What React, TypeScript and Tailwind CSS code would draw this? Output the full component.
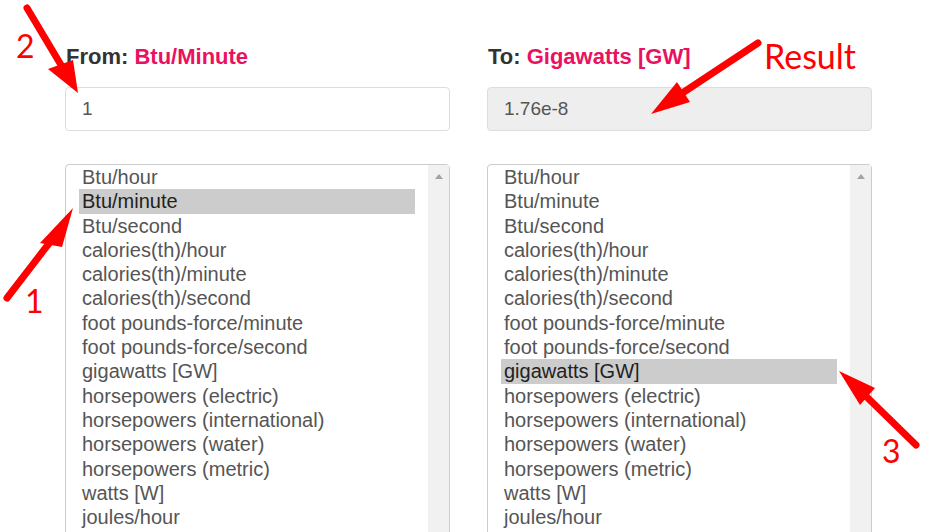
import React from 'react';

const units = [
  'Btu/hour',
  'Btu/minute',
  'Btu/second',
  'calories(th)/hour',
  'calories(th)/minute',
  'calories(th)/second',
  'foot pounds-force/minute',
  'foot pounds-force/second',
  'gigawatts [GW]',
  'horsepowers (electric)',
  'horsepowers (international)',
  'horsepowers (water)',
  'horsepowers (metric)',
  'watts [W]',
  'joules/hour',
];

const UnitList = ({ selected }: { selected: string }): React.JSX.Element => (
  <div className="mt-[33px] flex h-[420px] rounded-t-[4px] border border-[#cccccc] bg-white">
    <div className="flex-1 px-[13px] text-[20px]">
      {units.map((u) => (
        <div
          key={u}
          className={
            u === selected
              ? 'h-[24.3px] bg-[#cccccc] pl-[3px] leading-[24.3px] text-[#222222]'
              : 'h-[24.3px] pl-[3px] leading-[24.3px] text-[#555555]'
          }
        >
          {u}
        </div>
      ))}
    </div>
    <div className="flex w-[21px] justify-center bg-[#f1f1f1] pt-[9px]">
      <div className="h-0 w-0 border-x-[4px] border-b-[5px] border-x-transparent border-b-[#a3a3a3]" />
    </div>
  </div>
);

const Column = ({
  prefix,
  unit,
  value,
  readOnly,
  selected,
}: {
  prefix: string;
  unit: string;
  value: string;
  readOnly?: boolean;
  selected: string;
}): React.JSX.Element => (
  <div className="flex w-[385px] flex-col">
    <p className="h-[30px] pl-[1px] text-[22px] font-bold leading-[30px] text-[#333333]">
      {prefix} <span className="text-[#ea1160]">{unit}</span>
    </p>
    <div
      className={
        readOnly
          ? 'mt-[15px] flex h-[44px] items-center rounded-[4px] border border-[#dddddd] bg-[#eeeeee] px-[16px] text-[19px] text-[#555555]'
          : 'mt-[15px] flex h-[44px] items-center rounded-[4px] border border-[#dddddd] bg-white px-[16px] text-[19px] text-[#555555]'
      }
    >
      {value}
    </div>
    <UnitList selected={selected} />
  </div>
);

const Arrow = ({ x1, y1, x2, y2, h1, h2 }: { x1: number; y1: number; x2: number; y2: number; h1: [number, number]; h2: [number, number] }) => (
  <g>
    <line x1={x1} y1={y1} x2={(x2 + (h1[0] + h2[0]) / 2) / 2} y2={(y2 + (h1[1] + h2[1]) / 2) / 2} stroke="#ff0000" strokeWidth={7} strokeLinecap="round" />
    <polygon points={`${x2},${y2} ${h1[0]},${h1[1]} ${h2[0]},${h2[1]}`} fill="#ff0000" />
  </g>
);

export default function App(): React.JSX.Element {
  return (
    <div className="relative h-[532px] w-[936px] overflow-hidden bg-white font-['Liberation_Sans',Arial,sans-serif]">
      <div className="flex gap-[37px] pl-[65px] pt-[42px]">
        <Column prefix="From:" unit="Btu/Minute" value="1" selected="Btu/minute" />
        <Column prefix="To:" unit="Gigawatts [GW]" value="1.76e-8" readOnly selected="gigawatts [GW]" />
      </div>

      {/* annotations */}
      <svg className="pointer-events-none absolute left-0 top-0" width={936} height={532}>
        <Arrow x1={27} y1={8} x2={78} y2={93} h1={[48, 69]} h2={[73, 60]} />
        <Arrow x1={758} y1={43} x2={651} y2={114} h1={[677, 82]} h2={[690, 102]} />
        <Arrow x1={916} y1={445} x2={839} y2={371} h1={[875, 388]} h2={[860, 405]} />
        <Arrow x1={7} y1={298} x2={73} y2={208} h1={[40, 243]} h2={[62, 247]} />
      </svg>
      <span className="absolute left-[16px] top-[28px] font-['Lato',sans-serif] text-[32px] leading-[36px] text-[#ff0000]">2</span>
      <span className="absolute left-[25px] top-[283px] font-['Lato',sans-serif] text-[32px] leading-[36px] text-[#ff0000]">1</span>
      <span className="absolute left-[882px] top-[433px] font-['Lato',sans-serif] text-[32px] leading-[36px] text-[#ff0000]">3</span>
      <span className="absolute left-[764px] top-[36px] font-['Lato',sans-serif] text-[34px] leading-[40px] text-[#ff0000]">Result</span>
    </div>
  );
}
